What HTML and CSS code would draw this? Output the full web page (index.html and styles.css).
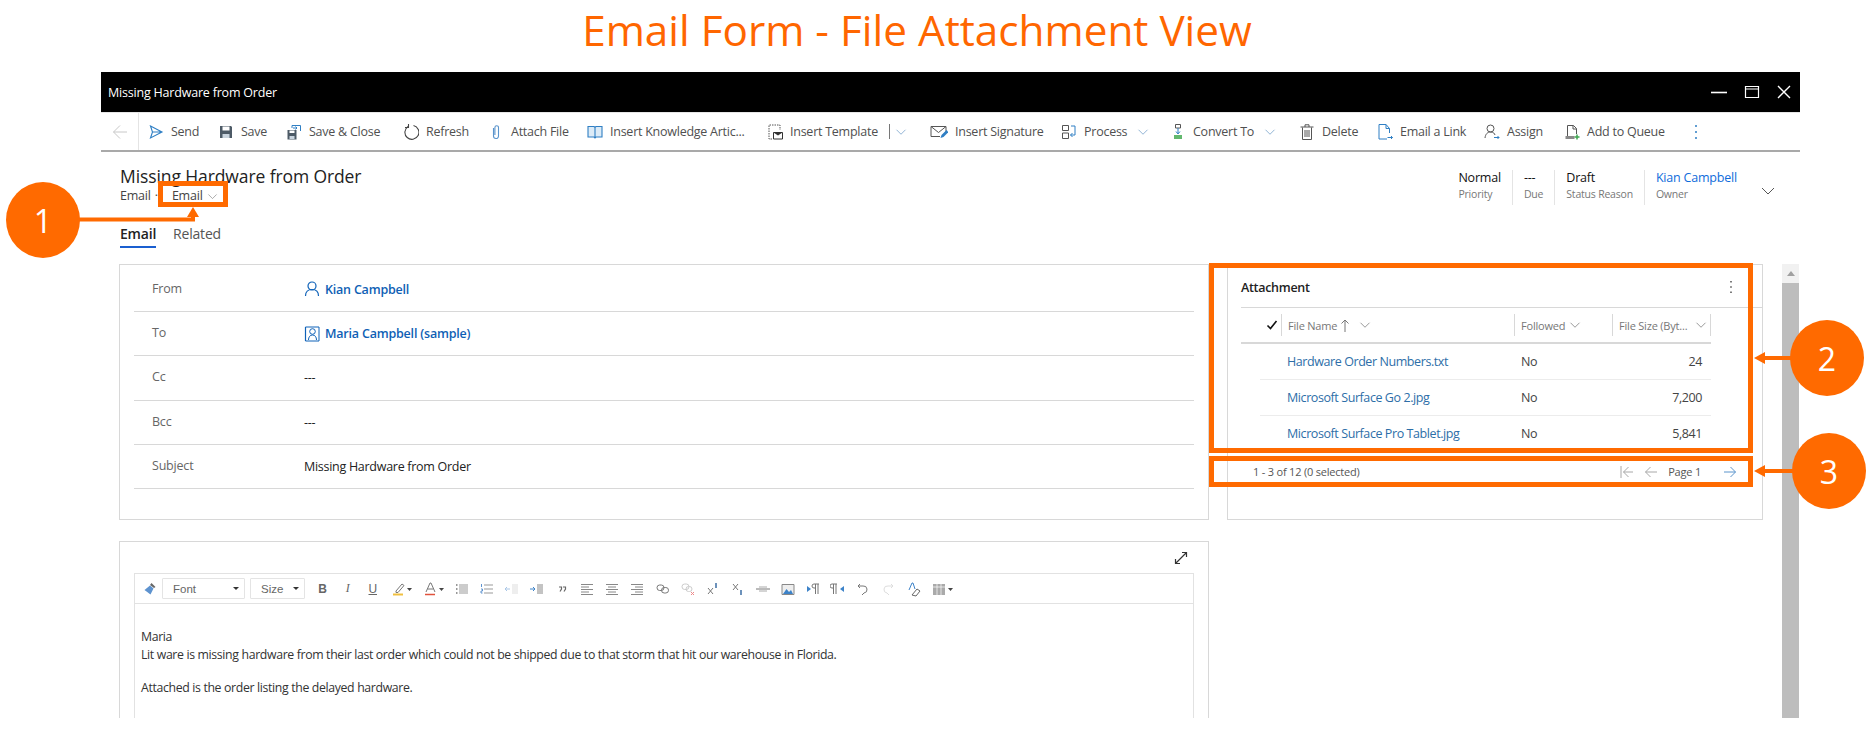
FILE: index.html
```html
<!DOCTYPE html>
<html lang="en">
  <head>
    <meta charset="UTF-8" />
    <meta name="viewport" content="width=device-width, initial-scale=1.0" />
    <link rel="stylesheet" href="styles.css">
    <title>Email Form - File Attachment View</title>
  </head>
  <body>
    <svg class="defs" width="0" height="0">
      <symbol id="chev" viewBox="0 0 16 16"><path d="M2 5l6 6 6-6" fill="none" stroke="currentColor" stroke-width="1"/></symbol>
    </svg>

    <h1 class="page-title">Email Form - File Attachment View</h1>

    <div class="window">
      <!-- title bar -->
      <div class="titlebar">
        <span class="titlebar-text">Missing Hardware from Order</span>
        <div class="win-controls">
          <svg width="16" height="16" viewBox="0 0 16 16"><path d="M0 8.5h16" stroke="#fff" stroke-width="1.6"/></svg>
          <svg width="16" height="16" viewBox="0 0 16 16"><path d="M1.5 2.5h13v11h-13zM1.5 5h13" fill="none" stroke="#fff" stroke-width="1.2"/></svg>
          <svg width="16" height="16" viewBox="0 0 16 16"><path d="M2 2l12 12M14 2L2 14" stroke="#fff" stroke-width="1.4"/></svg>
        </div>
      </div>

      <!-- command bar -->
      <div class="commandbar">
        <div class="back">
          <svg width="16" height="16" viewBox="0 0 16 16"><path d="M15 8H1.5M8 1.5L1.5 8 8 14.5" fill="none" stroke="#c8c8c8" stroke-width="1"/></svg>
        </div>
        <div class="commands">
          <div class="cmd"><svg width="16" height="16" viewBox="0 0 16 16"><path d="M2.5 2l11.5 6-11.5 6 2-6zM4.5 8H14" fill="none" stroke="#2f7fc4" stroke-width="1.1"/></svg>Send</div>
          <div class="cmd"><svg width="16" height="16" viewBox="0 0 16 16"><path d="M2 2h11l1 1v11H2z" fill="#4d5a66"/><path d="M4.5 2.5h7v4h-7z" fill="#fff"/><path d="M4.5 10h7v4h-7z" fill="#c9d4de"/></svg>Save</div>
          <div class="cmd"><svg width="16" height="16" viewBox="0 0 16 16"><path d="M1.5 6h9v9.5h-9z" fill="#4d5a66"/><path d="M3.5 6.5h5V9h-5z" fill="#fff"/><path d="M3.5 12h5v3h-5z" fill="#c9d4de"/><path d="M6 4V1.5h8.5V7" fill="none" stroke="#2f7fc4"/><path d="M7 4h4M9.5 2.5L11 4 9.5 5.500" fill="none" stroke="#2f7fc4"/></svg>Save &amp; Close</div>
          <div class="cmd"><svg width="16" height="16" viewBox="0 0 16 16"><path d="M5 2.500A7 7 0 1 0 10.500 1.500M5.500 0v3.500H2" fill="none" stroke="#444" stroke-width="1.100"/></svg>Refresh</div>
          <div class="cmd"><svg width="16" height="16" viewBox="0 0 16 16"><path d="M5.500 4v8a2.500 2.500 0 0 0 5 0V3.500a1.800 1.800 0 0 0-3.600 0V11" fill="none" stroke="#5a94cc" stroke-width="1.100"/></svg>Attach File</div>
          <div class="cmd"><svg width="16" height="16" viewBox="0 0 16 16"><path d="M1 2.500h6l1 1 1-1h6V13H9l-1 1-1-1H1zM8 3.500V14" fill="#dcebf7" stroke="#2f7fc4" stroke-width="1.100"/></svg>Insert Knowledge Artic...</div>
          <div class="cmd cmd-template"><svg width="16" height="16" viewBox="0 0 16 16"><path d="M9 1H2v14h4" fill="none" stroke="#555" stroke-dasharray="1.500 1"/><path d="M10 1h3v5" fill="none" stroke="#555" stroke-dasharray="1.500 1"/><path d="M6.500 8.500h9v6.500h-9z" fill="#fff" stroke="#333"/><path d="M6.500 8.500h9l-4.500 3z" fill="#333"/></svg>Insert Template<span class="cmd-sep"></span></div>
          <div class="cmd cmd-split"><svg class="chev" width="12" height="12"><use href="#chev"/></svg></div>
          <div class="cmd"><svg width="18" height="16" viewBox="0 0 18 16"><path d="M10 12.500H1V2.500h15V8" fill="none" stroke="#555"/><path d="M1 2.500l7.500 6 7.500-6" fill="none" stroke="#555"/><path d="M10.500 14l1-3 5-5 2 2-5 5z" fill="#2f7fc4"/></svg>Insert Signature</div>
          <div class="cmd"><svg width="16" height="16" viewBox="0 0 16 16"><path d="M1.500 1.500h6v5h-6zM1.500 9h6v5.500h-6z" fill="none" stroke="#555"/><path d="M10 2h4v9H9.500M11.500 9l-2 2 2 2" fill="none" stroke="#2f7fc4"/></svg>Process<svg class="chev chev-after" width="12" height="12"><use href="#chev"/></svg></div>
          <div class="cmd"><svg width="16" height="16" viewBox="0 0 16 16"><path d="M5.500 .5h5v3.500h-5z" fill="none" stroke="#555"/><path d="M8 4v5M6 7.500L8 10l2-2.500" fill="none" stroke="#2f7fc4"/><path d="M4 11h8v4H4z" fill="#62b86e"/></svg>Convert To<svg class="chev chev-after" width="12" height="12"><use href="#chev"/></svg></div>
          <div class="cmd"><svg width="16" height="16" viewBox="0 0 16 16"><path d="M3.500 3.500v12h9v-12M1.500 3h13M6 3V.8h4V3M6 6v7M8 6v7M10 6v7" fill="none" stroke="#555"/></svg>Delete</div>
          <div class="cmd"><svg width="16" height="16" viewBox="0 0 16 16"><path d="M12.500 9V4.500l-3.500-4H2v14.500h8M9 .5v4h3.500" fill="none" stroke="#2f7fc4"/><path d="M10.500 13.500h5M14 12l1.500 1.500L14 15" fill="none" stroke="#2f7fc4"/></svg>Email a Link</div>
          <div class="cmd"><svg width="16" height="16" viewBox="0 0 16 16"><circle cx="6.500" cy="4.500" r="3.500" fill="none" stroke="#555"/><path d="M1 14c.5-4 2.500-6 5.500-6s4 1.500 4.500 3" fill="none" stroke="#555"/><path d="M10 13.500h5M13.500 12l1.500 1.500-1.500 1.500" fill="none" stroke="#2f7fc4"/></svg>Assign</div>
          <div class="cmd"><svg width="16" height="16" viewBox="0 0 16 16"><path d="M3.500 12V1.500h6l3 3V10M9 1.500v3.500h3.500" fill="none" stroke="#555"/><path d="M1.500 12h9v3h-9z" fill="#8a8a8a"/><path d="M10.500 13h5M13 10.500v5" stroke="#3fa650" stroke-width="1.500"/></svg>Add to Queue</div>
          <div class="cmd cmd-more"><svg width="4" height="16" viewBox="0 0 4 16"><path d="M2 1v2M2 7v2M2 13v2" stroke="#2f7fc4" stroke-width="1.500"/></svg></div>
        </div>
      </div>

      <!-- record header -->
      <div class="record-head">
        <div class="record-title">
          <h2>Missing Hardware from Order</h2>
          <div class="record-type">
            <span>Email</span><span class="dot">·</span><span class="form-picker">Email<svg class="chev" width="11" height="11"><use href="#chev"/></svg></span>
          </div>
        </div>
        <div class="record-meta">
          <div class="meta"><b>Normal</b><span>Priority</span></div>
          <div class="meta"><b>---</b><span>Due</span></div>
          <div class="meta"><b>Draft</b><span>Status Reason</span></div>
          <div class="meta meta-owner"><b>Kian Campbell</b><span>Owner</span></div>
          <svg class="meta-chev" width="16" height="16"><use href="#chev"/></svg>
        </div>
      </div>

      <div class="tabs">
        <span class="tab tab-active">Email</span>
        <span class="tab">Related</span>
      </div>

      <div class="body-area">
        <div class="left-col">
          <div class="card form-card">
            <div class="field"><label>From</label><a class="lookup"><svg width="16" height="16" viewBox="0 0 16 16"><circle cx="8" cy="5" r="4" fill="none" stroke="#0f62b8" stroke-width="1.200"/><path d="M1.500 15c0-4 2.500-6.500 6.500-6.500s6.500 2.500 6.500 6.500" fill="none" stroke="#0f62b8" stroke-width="1.200"/></svg>Kian Campbell</a></div>
            <div class="field"><label>To</label><a class="lookup"><svg width="16" height="16" viewBox="0 0 16 16"><path d="M4 1h11v14H4M1.500 1H4M1.500 15H4" fill="none" stroke="#0f62b8" stroke-width="1"/><path d="M1.500 1v14" stroke="#0f62b8" stroke-width="1.200"/><circle cx="8.500" cy="5.500" r="2.800" fill="none" stroke="#0f62b8"/><path d="M4.500 14c0-3 1.500-5 4-5s4 2 4 5" fill="none" stroke="#0f62b8"/></svg>Maria Campbell (sample)</a></div>
            <div class="field"><label>Cc</label><span class="value">---</span></div>
            <div class="field"><label>Bcc</label><span class="value">---</span></div>
            <div class="field"><label>Subject</label><span class="value">Missing Hardware from Order</span></div>
          </div>

          <div class="card editor-card">
            <div class="editor-expand">
              <svg width="14" height="14" viewBox="0 0 14 14"><path d="M1.500 12.500l11-11M8 1.500h4.500V6M1.500 8v4.500H6" fill="none" stroke="#333" stroke-width="1.200"/></svg>
            </div>
            <div class="editor">
              <div class="editor-tools">
                <svg class="brush" width="16" height="16" viewBox="0 0 16 16"><path d="M9.500 2l4 4-1.500 1-4-3z" fill="#666"/><path d="M8 4.500l3.500 3-3 6-6-4.500z" fill="#5e93cf"/></svg>
                <div class="picker picker-font">Font<i class="caret"></i></div>
                <div class="picker picker-size">Size<i class="caret"></i></div>
                <div class="tool-row">
                  <span class="tool t-b">B</span>
                  <span class="tool t-i">I</span>
                  <span class="tool t-u">U</span>
                  <span class="tool tool-wide"><svg width="24" height="16" viewBox="0 0 24 16"><path d="M7 10l6-7 2 1.500-6 7H7z" fill="none" stroke="#777"/><path d="M4 13.500h10" stroke="#f0c040" stroke-width="2"/><path d="M18 7h5l-2.500 3z" fill="#444"/></svg></span>
                  <span class="tool tool-wide"><svg width="24" height="16" viewBox="0 0 24 16"><path d="M5 11L9 2h1l4 9M6.500 8h6" fill="none" stroke="#777"/><path d="M4 13.500h10" stroke="#e0533d" stroke-width="1.500"/><path d="M18 7h5l-2.500 3z" fill="#444"/></svg></span>
                  <span class="tool"><svg width="16" height="16" viewBox="0 0 16 16"><path d="M2 4h1.500M2 8h1.500M2 12h1.500" stroke="#777" stroke-width="1.500"/><path d="M5 4h9M5 6h9M5 8h9M5 10h9M5 12h9" stroke="#999"/></svg></span>
                  <span class="tool"><svg width="16" height="16" viewBox="0 0 16 16"><path d="M2.500 3v3M2 8h1.500v2H2v2h1.500" fill="none" stroke="#5e93cf"/><path d="M5 4h9M5 8h9M5 12h9" stroke="#999"/></svg></span>
                  <span class="tool"><svg width="16" height="16" viewBox="0 0 16 16"><path d="M1 8h5M3 6L1 8l2 2" fill="none" stroke="#a9c6e6"/><path d="M8 4h6M8 6h6M8 8h6M8 10h6M8 12h6" stroke="#ddd"/></svg></span>
                  <span class="tool"><svg width="16" height="16" viewBox="0 0 16 16"><path d="M1 8h5M4 6l2 2-2 2" fill="none" stroke="#3d83c9"/><path d="M8 4h6M8 6h6M8 8h6M8 10h6M8 12h6" stroke="#888"/></svg></span>
                  <span class="tool"><svg width="16" height="16" viewBox="0 0 16 16"><path d="M5 6h2.500v2L6 10.500M9 6h2.500v2L10 10.500" fill="none" stroke="#666" stroke-width="1.200"/></svg></span>
                  <span class="tool"><svg width="16" height="16" viewBox="0 0 16 16"><path d="M2 3.500h12M2 6h8M2 8.500h12M2 11h8M2 13.500h12" stroke="#888"/></svg></span>
                  <span class="tool"><svg width="16" height="16" viewBox="0 0 16 16"><path d="M2 3.500h12M4 6h8M2 8.500h12M4 11h8M2 13.500h12" stroke="#888"/></svg></span>
                  <span class="tool"><svg width="16" height="16" viewBox="0 0 16 16"><path d="M2 3.500h12M6 6h8M2 8.500h12M6 11h8M2 13.500h12" stroke="#888"/></svg></span>
                  <span class="tool"><svg width="16" height="16" viewBox="0 0 16 16"><rect x="2" y="4" width="7" height="5.500" rx="2.700" fill="none" stroke="#777"/><rect x="6.500" y="6.500" width="7" height="5.500" rx="2.700" fill="none" stroke="#777"/></svg></span>
                  <span class="tool"><svg width="16" height="16" viewBox="0 0 16 16"><rect x="2" y="3" width="7" height="5.500" rx="2.700" fill="none" stroke="#ccc"/><rect x="6" y="5.500" width="6" height="5" rx="2.500" fill="none" stroke="#ccc"/><path d="M11 11l3 3M14 11l-3 3" stroke="#e88"/></svg></span>
                  <span class="tool"><svg width="16" height="16" viewBox="0 0 16 16"><path d="M3 7l5 6M8 7l-5 6" stroke="#777"/><path d="M11 2v5" stroke="#3d6ea5" stroke-width="1.500"/></svg></span>
                  <span class="tool"><svg width="16" height="16" viewBox="0 0 16 16"><path d="M3 3l5 6M8 3L3 9" stroke="#777"/><path d="M11 9v5" stroke="#3d6ea5" stroke-width="1.500"/></svg></span>
                  <span class="tool"><svg width="16" height="16" viewBox="0 0 16 16"><path d="M1 8h14" stroke="#777"/><path d="M4 6h8M4 10h8" stroke="#aaa"/></svg></span>
                  <span class="tool"><svg width="16" height="16" viewBox="0 0 16 16"><path d="M2 3.500h12v10H2z" fill="#eee" stroke="#888"/><path d="M3 13l3.500-5 2.500 3 2-2 2 4z" fill="#3d83c9"/></svg></span>
                  <span class="tool"><svg width="16" height="16" viewBox="0 0 16 16"><path d="M9 3h5M10.500 3v10M13 3v10M9 3a2 2 0 0 0 0 4h1.500" fill="none" stroke="#777"/><path d="M2 5l4 3-4 3z" fill="#3d83c9"/></svg></span>
                  <span class="tool"><svg width="16" height="16" viewBox="0 0 16 16"><path d="M2 3h5M3.500 3v10M6 3v10M2 3a2 2 0 0 0 0 4h1.500" fill="none" stroke="#777"/><path d="M14 5l-4 3 4 3z" fill="#3d83c9"/></svg></span>
                  <span class="tool"><svg width="16" height="16" viewBox="0 0 16 16"><path d="M5 3l-2 2 2 2M3 5h5a3.500 3.500 0 0 1 1 7L7 14" fill="none" stroke="#777"/></svg></span>
                  <span class="tool"><svg width="16" height="16" viewBox="0 0 16 16"><path d="M11 3l2 2-2 2M13 5H8a3.500 3.500 0 0 0-1 7l2 2" fill="none" stroke="#ddd"/></svg></span>
                  <span class="tool"><svg width="16" height="16" viewBox="0 0 16 16"><path d="M3 9l3-7h1l2 6" fill="none" stroke="#3d83c9"/><path d="M6 14l5-6 3 2-4 5z" fill="none" stroke="#666"/></svg></span>
                  <span class="tool tool-wide"><svg width="24" height="16" viewBox="0 0 24 16"><path d="M3 3h12v11H3z" fill="#aaa"/><path d="M3 6h12M7 3v11M11 3v11" stroke="#fff" stroke-width=".7"/><path d="M18 7h5l-2.500 3z" fill="#444"/></svg></span>
                </div>
              </div>
              <div class="editor-text">
                <p>Maria</p>
                <p>Lit ware is missing hardware from their last order which could not be shipped due to that storm that hit our warehouse in Florida.</p>
                <p class="para-gap">Attached is the order listing the delayed hardware.</p>
              </div>
            </div>
          </div>
        </div>

        <div class="card attach-card">
          <div class="attach-head">
            <span>Attachment</span>
            <svg width="4" height="14" viewBox="0 0 4 14"><path d="M2 1v1.500M2 6.200v1.500M2 11.500V13" stroke="#444" stroke-width="1.400"/></svg>
          </div>
          <div class="grid grid-head">
            <span class="col-check"><svg width="12" height="12" viewBox="0 0 12 12"><path d="M1.500 6.500l3 3 6-7.500" fill="none" stroke="#111" stroke-width="1.600"/></svg></span>
            <span class="col-h">File Name<svg class="up" width="10" height="13" viewBox="0 0 10 13"><path d="M5 13V1M1.500 4.500L5 1l3.500 3.500" fill="none" stroke="#777"/></svg><svg class="chev chev-name" width="12" height="12"><use href="#chev"/></svg></span>
            <span class="col-h">Followed<svg class="chev chev-followed" width="12" height="12"><use href="#chev"/></svg></span>
            <span class="col-h col-last">File Size (Byt...<svg class="chev chev-size" width="12" height="12"><use href="#chev"/></svg></span>
          </div>
          <div class="grid grid-row">
            <a>Hardware Order Numbers.txt</a><span>No</span><span class="num">24</span>
          </div>
          <div class="grid grid-row">
            <a>Microsoft Surface Go 2.jpg</a><span>No</span><span class="num">7,200</span>
          </div>
          <div class="grid grid-row">
            <a>Microsoft Surface Pro Tablet.jpg</a><span>No</span><span class="num">5,841</span>
          </div>
          <div class="pager">
            <span class="pager-count">1 - 3 of 12 (0 selected)</span>
            <div class="pager-nav">
              <svg width="14" height="14" viewBox="0 0 14 14"><path d="M1 1v12M13 7H3.500M8.500 2L3.500 7l5 5" fill="none" stroke="#a8a8a8"/></svg>
              <svg width="14" height="14" viewBox="0 0 14 14"><path d="M13 7H1.500M6.500 2L1.500 7l5 5" fill="none" stroke="#a8a8a8"/></svg>
              <span class="page-no">Page 1</span>
              <svg width="14" height="14" viewBox="0 0 14 14"><path d="M1 7h11.500M7.500 2l5 5-5 5" fill="none" stroke="#5a94cc"/></svg>
            </div>
          </div>
        </div>

        <div class="scrollbar">
          <div class="scroll-up"></div>
          <div class="scroll-thumb"></div>
        </div>
      </div>
    </div>

    <!-- numbered callouts over the screenshot -->
    <div class="callout-box box-1"></div>
    <div class="callout-box box-2"></div>
    <div class="callout-box box-3"></div>
    <svg class="arrows" width="1872" height="742" viewBox="0 0 1872 742">
      <path d="M78 219.500h115V214" fill="none" stroke="#ff6a00" stroke-width="4"/>
      <path d="M193 207l6 10h-12z" fill="#ff6a00"/>
      <path d="M1792 358h-28" fill="none" stroke="#ff6a00" stroke-width="4"/>
      <path d="M1754 358l11-6v12z" fill="#ff6a00"/>
      <path d="M1794 471h-30" fill="none" stroke="#ff6a00" stroke-width="4"/>
      <path d="M1754 471l11-6v12z" fill="#ff6a00"/>
    </svg>
    <div class="badge badge-1">1</div>
    <div class="badge badge-2">2</div>
    <div class="badge badge-3">3</div>
  </body>
</html>
```

FILE: styles.css
```css
* {
  box-sizing: border-box;
}

body {
  margin: 0;
  height: 742px;
  overflow: hidden;
  position: relative;
  background-color: #fff;
  font-family: "Open Sans", "Liberation Sans", sans-serif;
  font-size: 12.5px;
  letter-spacing: -0.2px;
  color: #333;
}

.defs {
  position: absolute;
}

.page-title {
  margin: 0;
  height: 72px;
  width: 1834px;
  display: flex;
  justify-content: center;
  align-items: center;
  padding-bottom: 14px;
  font-size: 42.300px;
  font-weight: 400;
  letter-spacing: 0;
  color: #ff6600;
}

.window {
  margin-left: 101px;
  width: 1699px;
  height: 646px;
  overflow: hidden;
}

.titlebar {
  height: 40px;
  background-color: #000;
  color: #fff;
  display: flex;
  justify-content: space-between;
  align-items: center;
  padding: 0 8px 0 7px;
}

.win-controls {
  display: flex;
  gap: 16.500px;
  align-items: center;
}

.commandbar {
  height: 40px;
  display: flex;
  border-bottom: 2px solid #a9a9a9;
  border-top: 1px solid #e6e6e6;
  color: #505050;
  letter-spacing: -0.25px;
}

.back {
  width: 38px;
  padding-left: 11px;
  border-right: 1px solid #e4e4e4;
  display: flex;
  align-items: center;
}

.commands {
  margin-left: 9px;
  display: grid;
  grid-template-columns: 70px 68px 117px 85px 99px 180px 126px 37px 131px 109px 129px 78px 107px 80px 125px 20px;
}

.cmd {
  display: flex;
  align-items: center;
  gap: 7px;
  white-space: nowrap;
}

.cmd svg {
  flex: none;
}

.cmd-split {
  padding-left: 2px;
}

.cmd-more {
  padding-left: 5px;
}

.chev {
  color: #6e9bc7;
}

.cmd-sep {
  width: 1px;
  height: 15px;
  margin-left: 4px;
  background-color: #777;
}

.chev-after {
  margin-left: 3px;
}

.record-head {
  display: flex;
  justify-content: space-between;
  height: 72px;
  padding: 12px 24px 0 19px;
}

.record-title h2 {
  margin: 0;
  font-size: 17.500px;
  line-height: 24px;
  font-weight: 400;
  color: #222;
  letter-spacing: -0.1px;
}

.record-type {
  display: flex;
  align-items: center;
  line-height: 18px;
  margin-top: -1px;
  color: #444;
}

.dot {
  margin: 0 14px 0 4px;
}

.form-picker {
  display: flex;
  align-items: center;
  gap: 4px;
}

.form-picker .chev {
  color: #888;
}

.record-meta {
  display: flex;
  align-items: flex-start;
  font-size: 12px;
}

.meta {
  height: 35px;
  margin-top: 6px;
  padding: 0 11px;
  border-right: 1px solid #e4e4e4;
  display: flex;
  flex-direction: column;
}

.meta b {
  font-weight: 400;
  line-height: 16px;
  font-size: 12.5px;
  color: #111;
}

.meta span {
  font-size: 10.500px;
  line-height: 16px;
  color: #777;
}

.meta-owner {
  border-right: 0;
  padding-right: 23px;
}

.meta-owner b {
  color: #0f6cdb;
}

.meta-chev {
  margin-top: 19px;
  color: #555;
}

.tabs {
  margin-left: 19px;
  height: 40px;
  display: flex;
  gap: 17px;
  align-items: flex-start;
}

.tab {
  font-size: 14px;
  line-height: 20px;
  padding-bottom: 2px;
  color: #555;
  border-bottom: 2px solid transparent;
}

.tab-active {
  color: #222;
  font-weight: 600;
  border-bottom-color: #1a5fd0;
}

.body-area {
  margin-left: 18px;
  display: flex;
  align-items: flex-start;
}

.left-col {
  width: 1090px;
  flex: none;
}

.card {
  border: 1px solid #d8d8d8;
  background-color: #fff;
}

.form-card {
  height: 256px;
  padding: 2.500px 14px 0;
}

.field {
  height: 44.400px;
  padding-left: 18px;
  display: grid;
  grid-template-columns: 152px 1fr;
  align-items: center;
  border-bottom: 1px solid #d8d8d8;
}

.field label {
  color: #666;
  font-size: 12.5px;
  margin-top: -2px;
}

.lookup {
  display: flex;
  align-items: center;
  gap: 5px;
  font-weight: 600;
  color: #0f5fb5;
}

.value {
  color: #222;
  letter-spacing: -0.28px;
}

.editor-card {
  margin-top: 21px;
  height: 300px;
  padding: 0 14px;
}

.editor-expand {
  height: 31px;
  display: flex;
  justify-content: flex-end;
  align-items: center;
  padding-right: 6px;
}

.editor {
  border: 1px solid #e2e2e2;
  height: 260px;
}

.editor-tools {
  height: 30px;
  display: flex;
  align-items: center;
  border-bottom: 1px solid #e2e2e2;
  padding-left: 7px;
  color: #666;
}

.brush {
  margin-right: 4px;
}

.picker {
  height: 21px;
  border: 1px solid #e4e4e4;
  border-radius: 1px;
  display: flex;
  align-items: center;
  justify-content: space-between;
  padding: 0 5px 0 10px;
  font-family: "Liberation Sans", sans-serif;
  font-size: 11.500px;
  letter-spacing: 0;
  color: #666;
}

.picker-font {
  width: 83px;
  margin-right: 5px;
}

.picker-size {
  width: 55px;
  margin-right: 5px;
}

.caret {
  width: 0;
  height: 0;
  border-left: 3px solid transparent;
  border-right: 3px solid transparent;
  border-top: 3px solid #333;
}

.tool-row {
  display: flex;
}

.tool {
  width: 25.100px;
  height: 20px;
  flex: none;
  display: flex;
  align-items: center;
  justify-content: center;
  font-family: "Liberation Serif", serif;
  font-size: 12px;
  color: #666;
}

.tool-wide {
  width: 32px;
}

.tool svg {
  flex: none;
}

.t-b {
  font-family: "Liberation Sans", sans-serif;
  font-weight: 700;
}

.t-i {
  font-style: italic;
}

.t-u {
  font-family: "Liberation Sans", sans-serif;
  text-decoration: underline;
}

.editor-text {
  padding: 24px 6px 0;
  font-size: 12.300px;
  letter-spacing: -0.35px;
  line-height: 17.500px;
  color: #333;
}

.editor-text p {
  margin: 0;
}

.para-gap {
  margin-top: 16px !important;
}

.attach-card {
  margin-left: 18px;
  width: 536px;
  height: 256px;
  flex: none;
  padding-left: 13px;
}

.attach-head {
  height: 43px;
  display: flex;
  justify-content: space-between;
  align-items: center;
  padding-top: 2px;
  padding-right: 29px;
  border-bottom: 1px solid #d8d8d8;
  font-weight: 600;
  letter-spacing: -0.3px;
  color: #222;
}

.grid {
  display: grid;
  grid-template-columns: 40px 233px 98px 99px;
  margin-right: 51px;
}

.grid-head {
  height: 36px;
  border-bottom: 2px solid #d8d8d8;
  align-items: center;
  font-size: 11px;
  color: #777;
}

.col-check {
  padding-left: 25px;
  display: flex;
  align-items: center;
}

.col-h {
  height: 22px;
  display: flex;
  align-items: center;
  padding-left: 6px;
  border-left: 1px solid #d8d8d8;
}

.col-last {
  border-right: 1px solid #d8d8d8;
}

.up {
  margin-left: 3px;
}

.chev-name {
  margin-left: 9px;
}

.chev-followed {
  margin-left: 4px;
}

.chev-size {
  margin-left: 8px;
}

.col-h .chev {
  color: #777;
}

.grid-row {
  height: 36px;
  align-items: center;
  margin-left: 19px;
  grid-template-columns: 27px 234px 98px 83px 9px;
  border-bottom: 1px solid #ececec;
  letter-spacing: -0.42px;
  color: #444;
}

.grid-row a {
  grid-column: 2;
  color: #2d6ea8;
  white-space: nowrap;
}

.grid-row .num {
  text-align: right;
}

.pager {
  height: 31px;
  margin-top: 4px;
  display: flex;
  justify-content: space-between;
  align-items: center;
  padding: 0 25px 0 12px;
  font-size: 11px;
  color: #555;
}

.pager-nav {
  display: flex;
  align-items: center;
  gap: 10px;
}

.page-no {
  margin-right: 12px;
}

.scrollbar {
  margin-left: 19px;
  width: 17px;
  height: 460px;
  flex: none;
  background-color: #bdbdbd;
}

.scroll-up {
  height: 19px;
  background-color: #f1f1f1;
  display: flex;
  justify-content: center;
  align-items: center;
}

.scroll-up::after {
  content: "";
  border-left: 4px solid transparent;
  border-right: 4px solid transparent;
  border-bottom: 5px solid #a0a0a0;
}

.callout-box {
  position: absolute;
  border: 5px solid #ff6a00;
}

.box-1 {
  left: 158px;
  top: 181px;
  width: 70px;
  height: 26px;
}

.box-2 {
  left: 1209px;
  top: 263px;
  width: 544px;
  height: 190px;
}

.box-3 {
  left: 1209px;
  top: 456px;
  width: 544px;
  height: 31px;
}

.arrows {
  position: absolute;
  left: 0;
  top: 0;
}

.badge {
  position: absolute;
  width: 74px;
  height: 76px;
  border-radius: 50%;
  background-color: #ff6a00;
  color: #fff;
  display: flex;
  justify-content: center;
  align-items: center;
  font-size: 32px;
  letter-spacing: 0;
}

.badge-1 {
  left: 6px;
  top: 182px;
}

.badge-2 {
  left: 1790px;
  top: 320px;
}

.badge-3 {
  left: 1792px;
  top: 433px;
}
```
